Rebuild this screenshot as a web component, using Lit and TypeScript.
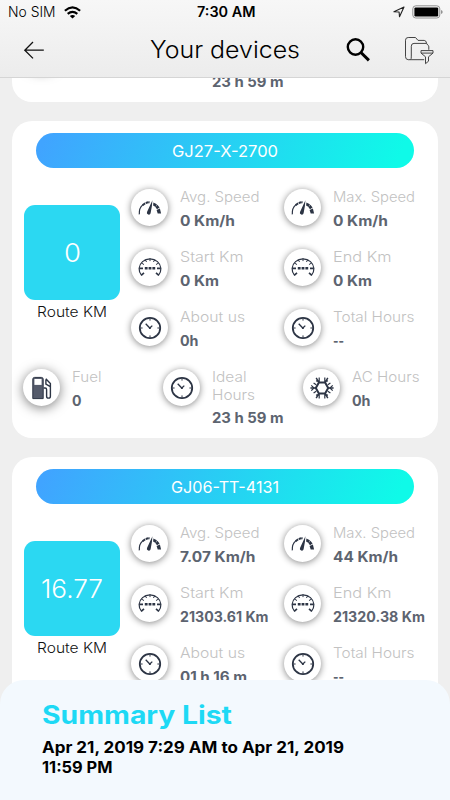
import { LitElement, html, css, svg } from "lit";
import { customElement, property } from "lit/decorators.js";

type Run = [string, number];
interface Stat { icon: string; label: Run[]; value: Run; }
interface Device { plate: Run; route: Run; stats: Stat[]; usage: Stat[]; }

/** One line of type, set to a fixed measure. An empty run keeps its height. */
const line = (run: Run, cls: string, height: number, baseline: number) => html`
  <svg class="line ${cls}" width=${run[1]} height=${height}>
    ${run[0] ? svg`<text x="0" y=${baseline} textLength=${run[1]} lengthAdjust="spacingAndGlyphs">${run[0]}</text>` : ""}
  </svg>`;

const ring = (angles: number[], r1: number, r2: number, width: number) =>
  angles.map((a) => {
    const c = Math.cos((a * Math.PI) / 180), s = Math.sin((a * Math.PI) / 180);
    return svg`<line x1=${12 + c * r1} y1=${12 + s * r1} x2=${12 + c * r2} y2=${12 + s * r2} stroke-width=${width} />`;
  });

const icons: Record<string, unknown> = {
  gauge: svg`
    <path d="M1.3 18.4C1 14 2.6 10.6 4.8 8.9" stroke-width="1.2"/>
    <path d="M4.6 9.2Q7.4 6.4 12 6.2" stroke-width="2" stroke-dasharray="3.2 .6"/>
    <path d="M14.4 4.2 13.9 10 12.6 17.2a1.9 1.9 0 1 1-3.6-1.2L12 9.6z" class="solid"/>
    <path d="m15.4 6.6 3.5 1.6-1.2 2.7-2.6-1.3zM19.4 8.8l2.2 2.7-2.6 1.7-1.5-1.9zM21.9 12.4l1.2 5.2h-3.4l-1.1-3.6z" class="solid"/>`,
  odometer: svg`
    <path d="M3.6 19.4A10.9 10.1 0 1 1 20.4 19.4" stroke-width="1.2"/>
    ${ring([-90, -60, -120, -30, -150], 6.9, 9.6, 1)}
    <path d="M1.2 12.4h3.8M19 12.4h3.8M3.2 19.4l2.8-2.6M20.8 19.4 18 16.8" stroke-width="1.6"/>
    <path d="M6.8 12.2h2.8M10.6 12.2h2.8M14.4 12.2h2.8" stroke-width="2.4"/>`,
  clock: svg`
    <circle cx="12" cy="12" r="10.2" stroke-width="1.8"/>
    ${ring([0, 90, 180, 270], 7.4, 9.6, 1)}
    <path d="M7.7 7.7 11.8 12 14.3 9.6" stroke-width="1.3"/>
    <circle cx="11.9" cy="12" r="1.1" class="solid"/>`,
  fuel: svg`
    <path d="M2.8 22.6V3.2Q2.8 1.4 4.6 1.4h6.8Q13.2 1.4 13.2 3.2v19.4z" class="tank"/>
    <path d="M4.4 3h7.2v5.9H4.4z" class="paper"/>
    <path d="M13.6 12h1.6q1.4 0 1.4 1.5v6.7q0 1.9 1.9 1.9t1.9-1.9V7.6l-4.6-4.9M15.9 3.8v4.4l4 2.2" stroke-width="1.4"/>`,
  ac: svg`
    <path d="M8.9 6.6h6.2l3.1 5.4-3.1 5.4H8.9L5.8 12z" stroke-width="2"/>
    ${ring([0, 60, 120, 180, 240, 300], 6.5, 11.6, 1.5)}
    <path d="M9.2 1.6v3.6L6 4.8M14.8 1.6v3.6l3.2-.4M9.2 22.4v-3.6L6 19.2M14.8 22.4v-3.6l3.2.4M1.3 9.4 4 12l-2.7 2.6M22.7 9.4 20 12l2.7 2.6M3.6 7l2.6 1.8M20.4 7l-2.6 1.8M3.6 17l2.6-1.8M20.4 17l-2.6-1.8" stroke-width="1.2"/>`,
};

const usageRow: Stat[] = [
  { icon: "fuel", label: [["Fuel", 29.5]], value: ["0", 9.5] },
  { icon: "clock", label: [["Ideal", 34.5], ["Hours", 43]], value: ["23 h 59 m", 71.5] },
  { icon: "ac", label: [["AC Hours", 67.5]], value: ["0h", 18.5] },
];

/** The end of the card that is scrolled under the header. */
const scrolledRow: Stat[] = [
  { icon: "fuel", label: [], value: ["", 9.5] },
  { icon: "clock", label: [["", 34.5], ["", 43]], value: ["23 h 59 m", 71.5] },
];

const makeStats = (v: Run[]): Stat[] => [
  { icon: "gauge", label: [["Avg. Speed", 79.5]], value: v[0] },
  { icon: "gauge", label: [["Max. Speed", 82]], value: v[1] },
  { icon: "odometer", label: [["Start Km", 63.5]], value: v[2] },
  { icon: "odometer", label: [["End Km", 58.5]], value: v[3] },
  { icon: "clock", label: [["About us", 65]], value: v[4] },
  { icon: "clock", label: [["Total Hours", 81.5]], value: v[5] },
];

const devices: Device[] = [
  {
    plate: ["GJ27-X-2700", 106], route: ["0", 17],
    stats: makeStats([["0 Km/h", 55], ["0 Km/h", 55], ["0 Km", 39], ["0 Km", 39], ["0h", 18.5], ["--", 11]]),
    usage: usageRow,
  },
  {
    plate: ["GJ06-TT-4131", 108], route: ["16.77", 62],
    stats: makeStats([["7.07 Km/h", 75.5], ["44 Km/h", 65], ["21303.61 Km", 88.5], ["21320.38 Km", 92], ["01 h 16 m", 67], ["--", 11]]),
    usage: [],
  },
];

const shared = css`
  * { box-sizing: border-box; }
  svg { display: block; flex: none; overflow: visible; }
  .line { font-family: Inter, "Open Sans", sans-serif; }
`;

@customElement("stat-item")
class StatItem extends LitElement {
  @property({ attribute: false }) stat!: Stat;
  static styles = [shared, css`
    :host { display: flex; gap: 12px; align-items: flex-start; }
    .disc { flex: none; display: grid; place-items: center; width: 37px; height: 37px; border-radius: 50%; background: #fff; box-shadow: 0 1px 7px rgba(0, 0, 0, .48); }
    .disc.fuel { box-shadow: 0 2px 12px rgba(0, 0, 0, .5); }
    .icon { fill: none; stroke: #2c3444; }
    .solid { fill: #2c3444; stroke: none; }
    .tank { fill: #555b6b; stroke: #2c3444; }
    .paper { fill: #fff; stroke: none; }
    .label { font-size: 14.4px; font-weight: 300; fill: #c2c2c2; }
    .value { font-size: 14px; font-weight: 700; fill: #5d6470; }
  `];
  render() {
    return html`
      <div class="disc ${this.stat.icon}"><svg class="icon" width="24" height="24" viewBox="0 0 24 24">${icons[this.stat.icon]}</svg></div>
      <div>
        ${this.stat.label.map((l) => line(l, "label", 17.5, 13))}
        ${line(this.stat.value, "value", 20, 19)}
      </div>`;
  }
}

@customElement("device-card")
class DeviceCard extends LitElement {
  @property({ attribute: false }) device?: Device;
  static styles = [shared, css`
    :host { display: flex; flex-direction: column; flex: none; padding: 12px; border-radius: 20px; background: #fff; }
    .plate { display: flex; justify-content: center; height: 35px; margin: 0 12px 21px; border-radius: 17.5px; background: linear-gradient(115deg, #40a4ff 3%, #0ffae8 95%); }
    .plate svg { font-size: 16.4px; fill: #fff; }
    .body { display: flex; gap: 11px; height: 180px; }
    .route { display: flex; flex-direction: column; align-items: center; width: 96px; padding-top: 15.5px; }
    .tile { display: grid; place-items: center; width: 96px; height: 95.5px; margin-bottom: 4px; border-radius: 11px; background: #2bd8f2; }
    .tile svg { font-size: 25.5px; font-weight: 300; fill: #fff; }
    .caption { font-size: 14px; font-weight: 300; fill: #111; }
    .grid { display: grid; grid-template-columns: 153px 153px; grid-auto-rows: 60px; }
    .usage { display: grid; grid-template-columns: 140px 140px 1fr; height: 57px; margin-left: -.7px; }
  `];
  render() {
    const d = this.device;
    return html`
      ${d ? html`
        <div class="plate">${line(d.plate, "", 35, 23.7)}</div>
        <div class="body">
          <div class="route">
            <div class="tile">${line(d.route, "", 30, 24.5)}</div>
            ${line(["Route KM", 70], "caption", 18, 13.4)}
          </div>
          <div class="grid">${d.stats.map((s) => html`<stat-item .stat=${s}></stat-item>`)}</div>
        </div>` : ""}
      <div class="usage">${(d?.usage ?? scrolledRow).map((s) => html`<stat-item .stat=${s}></stat-item>`)}</div>`;
  }
}

@customElement("app-root")
class AppRoot extends LitElement {
  static styles = [shared, css`
    :host { position: relative; display: flex; flex-direction: column; width: 450px; height: 800px; overflow: hidden; background: #efefef; }
    header { flex: none; height: 78px; background: linear-gradient(#f7f7f7, #ececec); border-bottom: 1px solid #d5d5d5; }
    .status { display: flex; align-items: center; height: 24px; padding: 0 7px 0 8px; }
    .status .carrier { font-size: 14px; font-weight: 300; margin-right: 8px; }
    .status .time { font-size: 14px; font-weight: 600; margin-left: 116px; margin-right: 138px; }
    .battery { margin-left: 7px; }
    .bar { display: flex; align-items: center; height: 51px; padding-left: 23px; }
    .title { font-size: 23.5px; font-weight: 300; margin-left: 106px; margin-right: 45px; }
    .folder { margin-left: 33px; }
    main { display: flex; flex: 1; flex-direction: column; gap: 19px; min-height: 0; padding: 0 12px; overflow: hidden; }
    .previous { margin-top: -57px; height: 81px; }
    footer { position: absolute; left: 0; right: 0; bottom: 0; height: 120px; padding: 18px 42px; border-radius: 24px 24px 0 0; background: #f3f9fe; }
    .heading { font-size: 25px; font-weight: 700; fill: #1dd9f5; }
    .dates { font-size: 15.7px; font-weight: 700; fill: #000; }
  `];
  render() {
    return html`
      <header>
        <div class="status">
          ${line(["No SIM", 47.5], "carrier", 24, 17.3)}
          <svg width="17" height="13" viewBox="0 0 17 13" fill="none" stroke="#000" stroke-width="2.2">
            <path d="M.9 4.8Q8.5-2 16.1 4.8M3.7 7.8q4.8-4 9.6 0"/><path d="M5.8 10q2.7-2.1 5.4 0l-2.7 2.6z" fill="#000" stroke="none"/>
          </svg>
          ${line(["7:30 AM", 58.5], "time", 24, 17.3)}
          <svg width="12" height="12" viewBox="0 0 12 12" fill="none" stroke="#222" stroke-width="1.1" stroke-linejoin="round"><path d="M.9 5.7 11 1.1 6.5 10.8 6.1 6z"/></svg>
          <svg class="battery" width="31" height="14" viewBox="0 0 31 14">
            <rect x=".8" y=".8" width="27" height="12.2" rx="3" fill="#f5f5f5" stroke="#929292"/>
            <rect x="2.4" y="2.4" width="23.8" height="9" rx="1.2"/><path d="M29 5v4q1.7-.7 1.7-2T29 5z" fill="#929292"/>
          </svg>
        </div>
        <div class="bar">
          <svg width="21" height="20" viewBox="0 0 21 20" fill="none" stroke="#111" stroke-width="1.3"><path d="M10 2 1.8 10.2 10 18.4M1.8 10.2h19"/></svg>
          ${line(["Your devices", 150], "title", 32, 23.8)}
          <svg width="26" height="26" viewBox="0 0 26 26" fill="none" stroke="#000"><circle cx="10.5" cy="10" r="7.7" stroke-width="2.4"/><path d="m16.2 15.8 7.7 7.6" stroke-width="3"/></svg>
          <svg class="folder" width="31" height="30" viewBox="0 0 31 30" fill="none" stroke="#444" stroke-width="1">
            <path d="M6 24.7H4.2Q1.5 24.5 1.5 21.7V5.2Q1.5 2.5 4.2 2.5h7.3L14 5.4h6.2q2 0 2.4 3"/>
            <path d="M6 24.7q1.7-.6 1.3-3.6V11.2q0-2.8 2.7-2.8h12.6l1.2 1.8q1 .2 1 1.6v3M6 24.7h14.2"/>
            <path d="M17 15.6h12v2.5l-4.5 3.7v4.4l-3 2.5v-6.9L17 18.1zM17 18.1h12"/>
          </svg>
        </div>
      </header>
      <main>
        <device-card class="previous"></device-card>
        ${devices.map((d) => html`<device-card .device=${d}></device-card>`)}
      </main>
      <footer>
        ${line(["Summary List", 190], "heading", 34, 25.5)}
        ${line(["Apr 21, 2019 7:29 AM to Apr 21, 2019", 302], "dates", 20.5, 20.7)}
        ${line(["11:59 PM", 70.5], "dates", 20.5, 20)}
      </footer>`;
  }
}
